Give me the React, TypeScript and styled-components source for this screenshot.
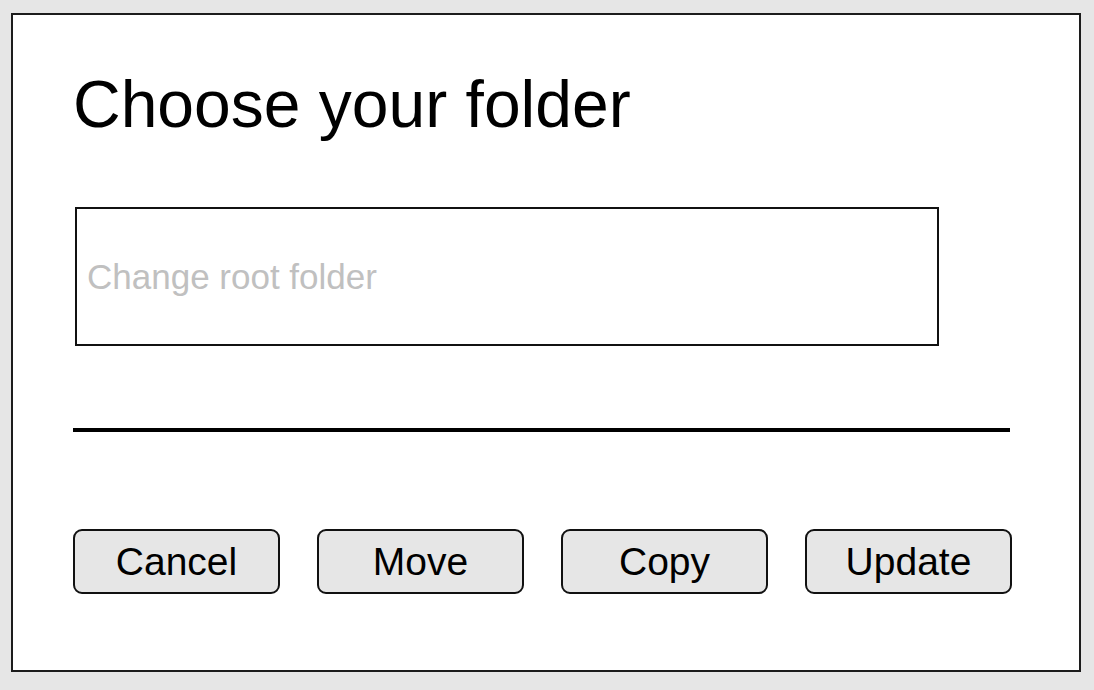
import * as React from 'react';
import styled, { createGlobalStyle } from 'styled-components';

const ACTIONS = ['Cancel', 'Move', 'Copy', 'Update'];

const GlobalStyle = createGlobalStyle`
  html, body {
    margin: 0;
    padding: 0;
    background: #e6e6e6;
  }
  body {
    font-family: 'Liberation Sans', Arial, Helvetica, sans-serif;
    color: #000;
  }
`;

export default function App() {
  return (
    <>
      <GlobalStyle />
      <Page>
        <Dialog>
          <Title>Choose your folder</Title>
          <FolderInput placeholder="Change root folder" />
          <Divider />
          <ButtonRow>
            {ACTIONS.map((label) => (
              <ActionButton key={label}>{label}</ActionButton>
            ))}
          </ButtonRow>
        </Dialog>
      </Page>
    </>
  );
}

const Page = styled.div`
  width: 1094px;
  height: 690px;
  padding: 13px 0 0 11px;
  box-sizing: border-box;
`;

const Dialog = styled.div`
  width: 1070px;
  height: 659px;
  box-sizing: border-box;
  border: 2px solid #1c1c1c;
  background: #fff;
  padding: 0 0 0 60px;
  display: flex;
  flex-direction: column;
  align-items: flex-start;
`;

const Title = styled.h1`
  margin: 56px 0 0 0;
  font-size: 66px;
  line-height: 66px;
  font-weight: normal;
  letter-spacing: 0;
`;

const FolderInput = styled.input`
  margin: 70px 0 0 2px;
  width: 864px;
  height: 139px;
  box-sizing: border-box;
  border: 2px solid #111;
  padding: 0 10px;
  background: #fff;
  font-family: inherit;
  font-size: 35px;
  color: #000;
  outline: none;

  &::placeholder {
    color: #c0c0c0;
  }
`;

const Divider = styled.hr`
  margin: 82px 0 0;
  width: 937px;
  height: 4px;
  border: none;
  background: #000;
`;

const ButtonRow = styled.div`
  margin-top: 97px;
  display: flex;
  gap: 37px;
`;

const ActionButton = styled.button`
  width: 207px;
  height: 65px;
  box-sizing: border-box;
  border: 2px solid #111;
  border-radius: 9px;
  background: #e6e6e6;
  font-family: inherit;
  font-size: 39px;
  color: #000;
  padding: 0;
  cursor: pointer;
`;
